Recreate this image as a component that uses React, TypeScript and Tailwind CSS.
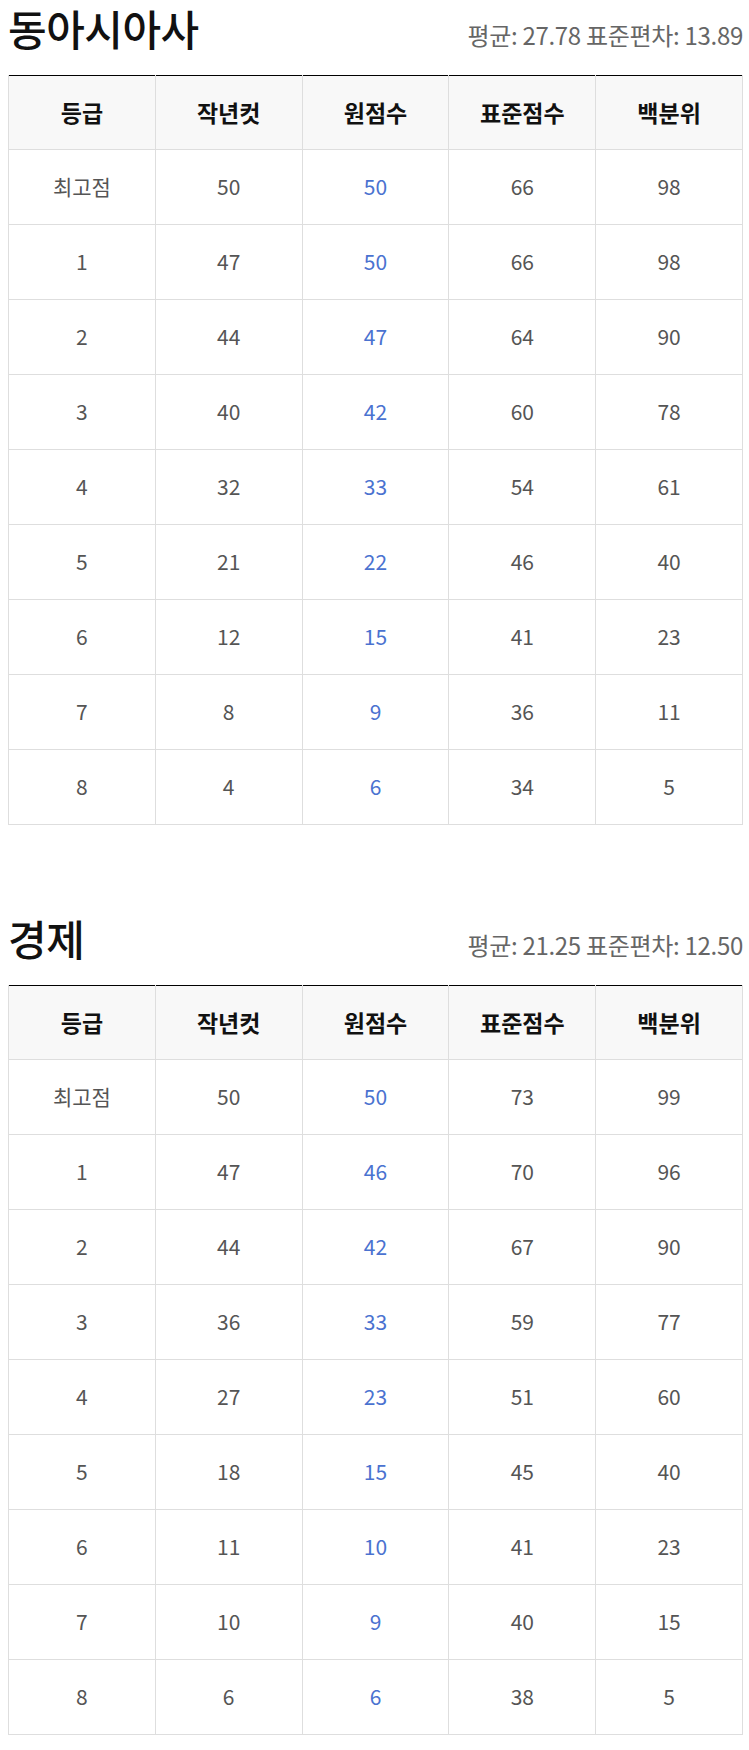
import React from "react";

type Row = [string, number, number, number, number];

const sections: { title: string; mean: string; sd: string; rows: Row[] }[] = [
  {
    title: "동아시아사",
    mean: "27.78",
    sd: "13.89",
    rows: [
      ["최고점", 50, 50, 66, 98],
      ["1", 47, 50, 66, 98],
      ["2", 44, 47, 64, 90],
      ["3", 40, 42, 60, 78],
      ["4", 32, 33, 54, 61],
      ["5", 21, 22, 46, 40],
      ["6", 12, 15, 41, 23],
      ["7", 8, 9, 36, 11],
      ["8", 4, 6, 34, 5],
    ],
  },
  {
    title: "경제",
    mean: "21.25",
    sd: "12.50",
    rows: [
      ["최고점", 50, 50, 73, 99],
      ["1", 47, 46, 70, 96],
      ["2", 44, 42, 67, 90],
      ["3", 36, 33, 59, 77],
      ["4", 27, 23, 51, 60],
      ["5", 18, 15, 45, 40],
      ["6", 11, 10, 41, 23],
      ["7", 10, 9, 40, 15],
      ["8", 6, 6, 38, 5],
    ],
  },
];

const headers = ["등급", "작년컷", "원점수", "표준점수", "백분위"];

function Section({ s }: { s: (typeof sections)[number] }) {
  return (
    <section>
      <div className="flex h-[75px] items-end justify-between pb-[28px]">
        <h2 className="text-[42px] leading-none font-medium text-[#111] tracking-[-0.5px] -mb-[2px]">{s.title}</h2>
        <div className="text-[24px] leading-none text-[#666] tracking-[-0.3px]">
          평균: {s.mean} 표준편차: {s.sd}
        </div>
      </div>
      <table className="w-[735px] table-fixed border-collapse border-t border-t-black">
        <thead>
          <tr className="h-[74px] bg-[#f8f8f8]">
            {headers.map((h) => (
              <th
                key={h}
                className="border-x border-b border-[#dedede] text-[23px] font-bold text-[#111] text-center"
              >
                {h}
              </th>
            ))}
          </tr>
        </thead>
        <tbody>
          {s.rows.map((r, i) => (
            <tr key={i} className="h-[75px]">
              {r.map((c, j) => (
                <td
                  key={j}
                  className={
                    j === 2
                      ? "border border-[#dedede] text-center text-[21px] text-[#4a72d0]"
                      : "border border-[#dedede] text-center text-[21px] text-[#555]"
                  }
                >
                  {c}
                </td>
              ))}
            </tr>
          ))}
        </tbody>
      </table>
    </section>
  );
}

export default function App() {
  return (
    <div
      className="w-[749px] bg-white pl-[8px] pr-[6px] flex flex-col gap-[85px]"
      style={{ fontFamily: '"Noto Sans CJK KR", "Noto Sans", sans-serif' }}
    >
      {sections.map((s) => (
        <Section key={s.title} s={s} />
      ))}
    </div>
  );
}
